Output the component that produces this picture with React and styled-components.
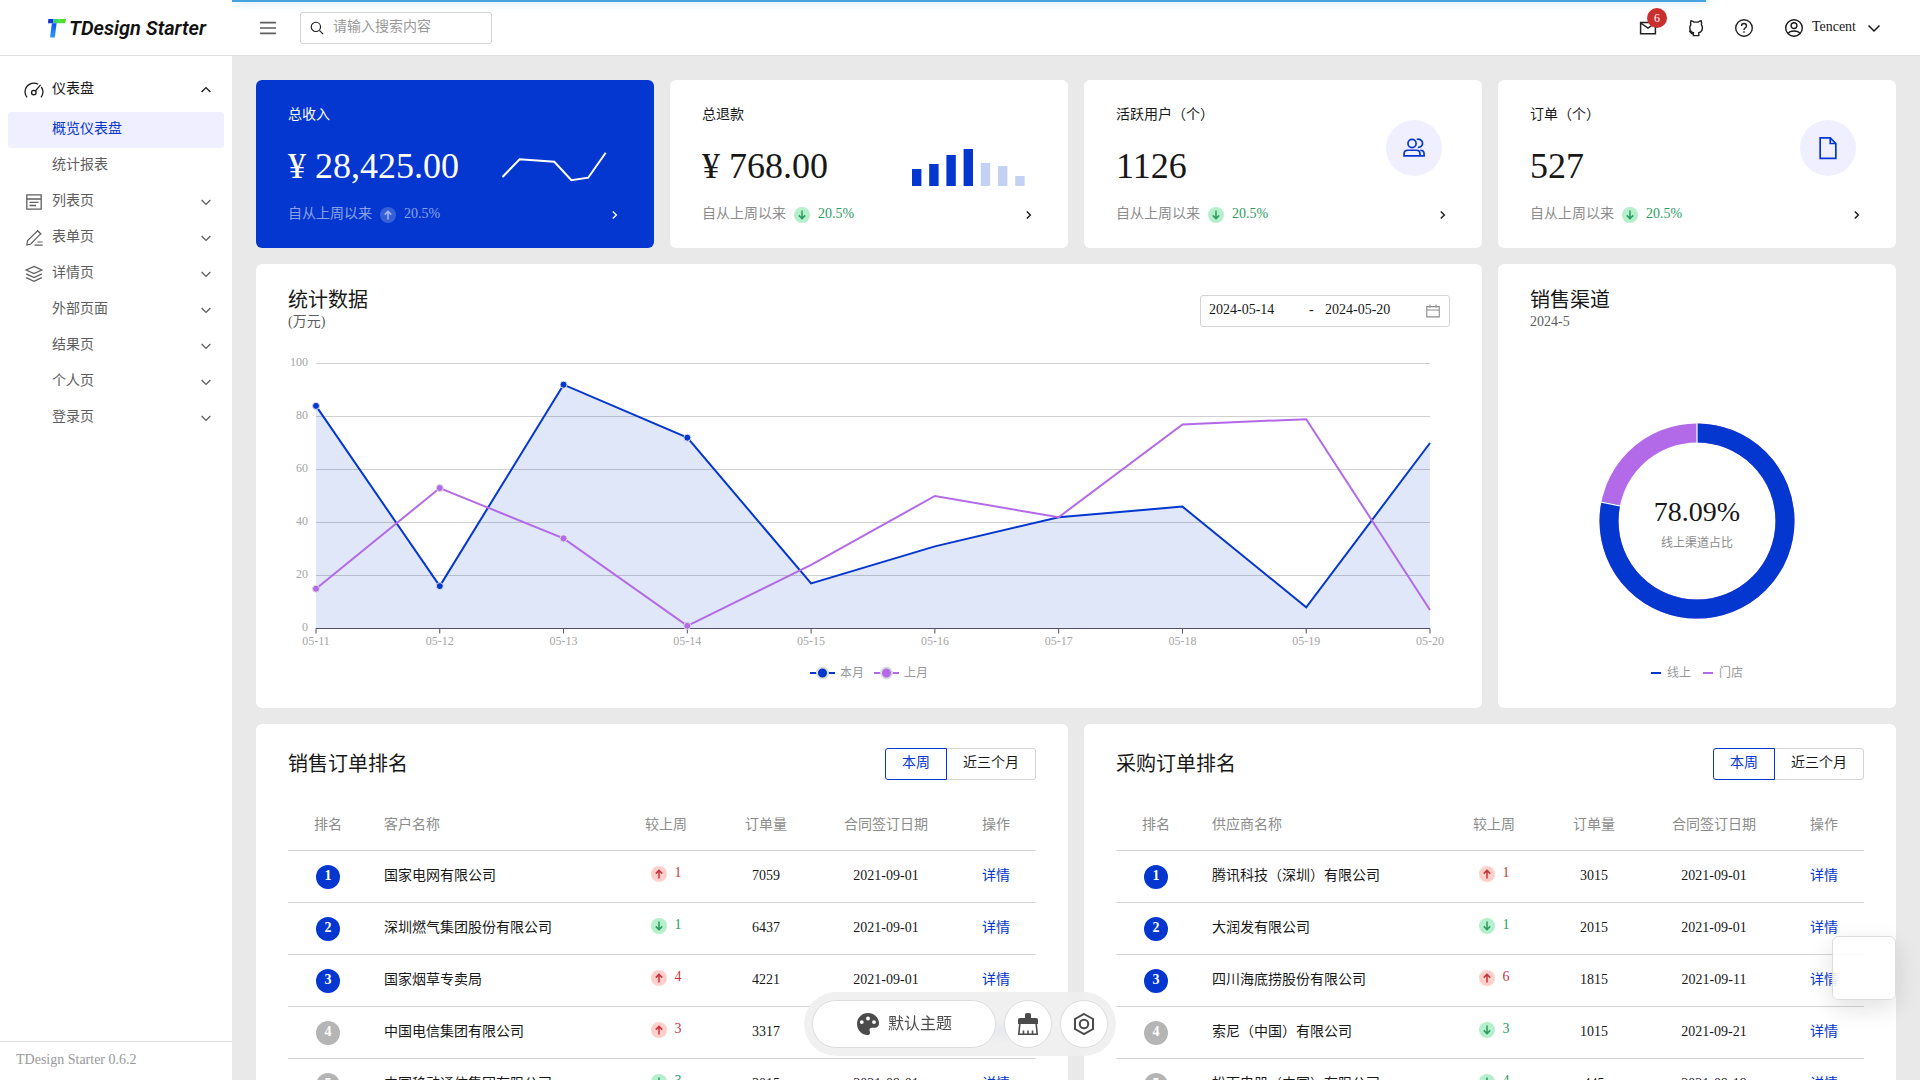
import React, { useState } from "react";
import styled, { createGlobalStyle, css } from "styled-components";

const BRAND = "#0437cf";
const PURPLE = "#b36ae8";

const GlobalStyle = createGlobalStyle`
  *, *::before, *::after {
    box-sizing: border-box;
  }
  body {
    margin: 0;
    background: #e9e9e9;
    color: #181818;
    font-family: "Liberation Serif", "Noto Sans CJK SC", serif;
    font-size: 14px;
    line-height: 22px;
  }
  button, input {
    font: inherit;
    color: inherit;
  }
  button {
    border: 0;
    padding: 0;
    background: none;
    cursor: pointer;
  }
  a {
    color: inherit;
    text-decoration: none;
  }
  h1, h2, p {
    margin: 0;
    font-weight: 400;
  }
  svg {
    display: block;
    flex-shrink: 0;
  }
`;

/* ---------- icons ---------- */

const Icon = ({ size = 20, width = 1.3, children }) => (
  <svg
    width={size}
    height={size}
    viewBox="0 0 20 20"
    fill="none"
    stroke="currentColor"
    strokeWidth={width}
    aria-hidden="true"
  >
    {children}
  </svg>
);

const DashboardIcon = () => (
  <Icon>
    <path d="M3 17.3A9.3 9.3 0 0 1 1 12 9 9 0 0 1 14.2 4.2M17.3 7A9 9 0 0 1 19 12a9.3 9.3 0 0 1-2 5.3" />
    <circle cx="9.8" cy="12.6" r="2.3" />
    <path d="M11.4 10.9l5.2-6" />
  </Icon>
);
const ListIcon = () => (
  <Icon>
    <path d="M2.8 2.8h14.4v14.4H2.8zM2.8 7h14.4M5.5 10.3h9M5.5 13.5h6.5" />
  </Icon>
);
const EditIcon = () => (
  <Icon width={1.2}>
    <path d="M2.8 17l.8-4.4 10-9.8 3 3-9.8 10.2zM13.2 2.2l4.2 4.2M13.5 14h5.2M10.5 17.2h8.2" />
  </Icon>
);
const LayersIcon = () => (
  <Icon>
    <path d="M10 2.4l7.8 3.6L10 9.6 2.2 6zM2.2 9.8L10 13.6l7.8-3.8M2.2 13.6L10 17.4l7.8-3.8" />
  </Icon>
);
const MenuIcon = () => (
  <Icon width={1.6}>
    <path d="M2 4.6h16M2 10h16M2 15.4h16" />
  </Icon>
);
const SearchIcon = () => (
  <Icon size={16} width={1.4}>
    <circle cx="8.6" cy="8.6" r="5.8" />
    <path d="M13 13l4.6 4.6" />
  </Icon>
);
const MailIcon = () => (
  <Icon width={1.5}>
    <path d="M2.6 4.6h14.8v11.2H2.6zM2.6 5l7.4 5.2L17.4 5" />
  </Icon>
);
const GithubIcon = () => (
  <Icon width={1.4}>
    <path d="M7.4 17.6v-3C5 14.200 3.800 12.600 3.800 9.800c0-1.300.3-2.300 1-3.100-.3-1.300-.2-2.700.2-3.900 1.200.1 2.200.7 3 1.300h4.200c.8-.6 1.800-1.200 3-1.300.4 1.200.5 2.600.2 3.900.7.8 1 1.800 1 3.100 0 2.800-1.200 4.400-3.600 4.800v3zM7.400 16c-2.400.4-2.600-2.400-4.400-2.900" />
  </Icon>
);
const HelpIcon = () => (
  <Icon width={1.4}>
    <circle cx="10" cy="10" r="8.3" />
    <path d="M7.5 8c0-1.500 1.100-2.500 2.500-2.500s2.500 1 2.500 2.400c0 1.900-2.500 2-2.500 4.100M10 13.200v1.600" />
  </Icon>
);
const UserIcon = () => (
  <Icon width={1.4}>
    <circle cx="10" cy="10" r="8.3" />
    <circle cx="10" cy="7.6" r="2.9" />
    <path d="M4 15.600c1-1.700 3.200-2.600 6-2.600s5 .9 6 2.600" />
  </Icon>
);
const ChevronIcon = ({ size = 16, direction = "down", width = 1.7 }) => {
  const paths = {
    down: "M4.500 7.500L10 13l5.500-5.500",
    up: "M4.500 12.500L10 7l5.500 5.500",
    right: "M8.500 5.500L13 10l-4.500 4.500",
  };
  return (
    <Icon size={size} width={width}>
      <path d={paths[direction]} />
    </Icon>
  );
};
const CalendarIcon = () => (
  <Icon size={16} width={1.4}>
    <path d="M2.200 4.500h15.600v12.800H2.200zM2.200 8.800h15.600M6.200 1.800v4M13.800 1.800v4" />
  </Icon>
);
const UsersIcon = () => (
  <Icon size={28} width={1.2}>
    <circle cx="8.6" cy="6.8" r="2.9" />
    <path d="M12 4a2.900 2.900 0 1 1 .8 5.500M2.900 15.600v-1.400c0-1.500 1-2.600 2.600-2.600h6.200c1.600 0 2.600 1.100 2.600 2.600v1.400zM14.500 11.600c1.700 0 2.700 1.100 2.700 2.600v1.400h-2.900" />
  </Icon>
);
const FileIcon = () => (
  <Icon size={28} width={1.2}>
    <path d="M4.400 2.800h7.200l4 4v10.600H4.400zM11.600 2.800v4h4" />
  </Icon>
);
const ArrowIcon = ({ up }) => (
  <Icon size={16} width={1.9}>
    <path
      d={up ? "M10 15.500V5.500M6 9.500l4-4 4 4" : "M10 4.500v10M6 10.500l4 4 4-4"}
    />
  </Icon>
);
const PaletteIcon = () => (
  <svg width="24" height="24" viewBox="0 0 24 24" aria-hidden="true">
    <path
      fill="currentColor"
      fillRule="evenodd"
      d="M12 1C5.900 1 1 5.800 1 11.900 1 18 5.900 23 11.600 23c1.700 0 2.600-1.200 2.400-2.600l-.5-2.400c-.2-1.300.7-2.300 2-2.300h3.300c2.500 0 4.200-1.800 4.200-4.300C23 5.400 18 1 12 1zM5.800 12a1.900 1.900 0 1 1 0-3.800 1.900 1.900 0 0 1 0 3.800zM12 8.400a1.900 1.900 0 1 1 0-3.800 1.900 1.900 0 0 1 0 3.800zM18 12a1.900 1.900 0 1 1 0-3.800 1.900 1.900 0 0 1 0 3.800z"
    />
  </svg>
);
const BrushIcon = () => (
  <svg width="24" height="24" viewBox="0 0 24 24" aria-hidden="true">
    <path
      fill="currentColor"
      d="M9 3c0-1.200.8-2 2-2h2c1.200 0 2 .8 2 2v3h5c1.200 0 2 .8 2 2v4H2V8c0-1.200.8-2 2-2h5z"
    />
    <path
      fill="none"
      stroke="currentColor"
      strokeWidth="1.6"
      d="M3.800 12l-1 10.200h18.400l-1-10.200M7.500 22v-3.500M12 22v-3.500M16.500 22v-3.500"
    />
  </svg>
);
const SettingIcon = () => (
  <svg
    width="24"
    height="24"
    viewBox="0 0 24 24"
    fill="none"
    stroke="currentColor"
    strokeWidth="2"
    aria-hidden="true"
  >
    <path d="M12 2l9 5v10l-9 5-9-5V7z" />
    <circle cx="12" cy="12" r="4.2" />
  </svg>
);
const LogoMark = () => (
  <svg width="18" height="20" viewBox="0 0 18 20" aria-hidden="true">
    <defs>
      <linearGradient id="leaf" x1="0" x2="1">
        <stop offset="0" stopColor="#1fc9a0" />
        <stop offset="0.5" stopColor="#5be03a" />
        <stop offset="1" stopColor="#3fdc2c" />
      </linearGradient>
      <linearGradient id="stem" x1="0" x2="0" y1="0" y2="1">
        <stop offset="0" stopColor="#0a55e8" />
        <stop offset="1" stopColor="#2b9bff" />
      </linearGradient>
    </defs>
    <path d="M.3 1h4.900v4.200H0z" fill="#1337d6" />
    <path d="M5.200 1H18l-.9 4.200H5.200z" fill="url(#leaf)" />
    <path d="M3.900 5.200h4.700L6.800 19.400H2z" fill="url(#stem)" />
  </svg>
);

/* ---------- layout ---------- */

const Layout = styled.div`
  display: flex;
  height: 100vh;
  overflow: hidden;
`;

const Progress = styled.div`
  position: fixed;
  top: 0;
  left: 232px;
  right: 214px;
  height: 2px;
  background: #45a3e0;
  box-shadow: 4px 0 8px rgba(69, 163, 224, 0.6);
  clip-path: inset(0 -16px -8px 0);
  z-index: 5;
`;

const Sidebar = styled.aside`
  display: flex;
  flex-direction: column;
  flex-shrink: 0;
  width: 232px;
  background: #fff;
`;

const Logo = styled.a`
  display: flex;
  align-items: center;
  gap: 3px;
  height: 56px;
  padding-left: 48px;
  border-bottom: 1px solid #dfdfdf;
  font-family: Roboto, sans-serif;
  font-size: 20px;
  font-weight: 600;
  font-style: italic;
  color: #111;
`;

const Menu = styled.ul`
  flex: 1;
  margin: 0;
  padding: 16px 8px;
  list-style: none;
`;

const SubMenu = styled.ul`
  margin: 4px 0 0;
  padding: 0;
  list-style: none;
`;

const MenuLink = styled.a`
  display: grid;
  grid-template-columns: 20px 1fr 16px;
  align-items: center;
  gap: 8px;
  height: 36px;
  padding: 0 10px 0 16px;
  border-radius: 3px;
  color: #5e5e5e;

  ${(props) =>
    props.$open &&
    css`
      color: #181818;
    `}
  ${(props) =>
    props.$active &&
    css`
      color: ${BRAND};
      background: #f0efff;
    `}
`;

const Raised = styled.span`
  padding-bottom: 2px;
`;

const Version = styled.footer`
  padding: 7px 16px 9px;
  border-top: 1px solid #dfdfdf;
  color: #999;
`;

const Main = styled.div`
  display: flex;
  flex: 1;
  flex-direction: column;
  min-width: 0;
`;

const Header = styled.header`
  display: flex;
  flex-shrink: 0;
  align-items: center;
  justify-content: space-between;
  height: 56px;
  padding: 0 28px 0 20px;
  background: #fff;
  border-bottom: 1px solid #dfdfdf;
`;

const HeaderGroup = styled.div`
  display: flex;
  align-items: center;
  gap: 16px;
`;

const IconButton = styled.button`
  display: flex;
  position: relative;
  align-items: center;
  justify-content: center;
  width: 32px;
  height: 32px;
  color: ${(props) => props.$color || "#222"};
`;

const Badge = styled.span`
  position: absolute;
  top: -4px;
  right: -3px;
  width: 20px;
  height: 20px;
  border-radius: 10px;
  background: #c9302d;
  color: #fff;
  font-size: 12px;
  line-height: 20px;
  text-align: center;
`;

const Search = styled.label`
  display: flex;
  align-items: center;
  gap: 8px;
  width: 192px;
  height: 32px;
  padding: 0 8px;
  border: 1px solid #d4d4d4;
  border-radius: 3px;

  input {
    width: 100%;
    padding: 0 0 2px;
    border: 0;
    outline: 0;
    background: none;
  }
  input::placeholder {
    color: #999;
    opacity: 1;
  }
`;

const UserButton = styled.button`
  display: flex;
  align-items: center;
  gap: 8px;
  height: 32px;
  padding: 0 8px;
`;

const Content = styled.main`
  display: grid;
  grid-template-columns: repeat(4, minmax(0, 1fr));
  grid-auto-rows: max-content;
  gap: 16px;
  flex: 1;
  padding: 24px;
  overflow: auto;
  scrollbar-width: none;
`;

const Card = styled.section`
  grid-column: span ${(props) => props.$span || 1};
  padding: 24px 32px;
  border-radius: 6px;
  background: #fff;
`;

const StatCard = styled(Card)`
  display: grid;
  grid-template-columns: 1fr auto;
  grid-template-rows: 24px 76px 22px;
  padding-bottom: 22px;
  color: ${(props) => (props.$primary ? "#fff" : "#181818")};
  background: ${(props) => (props.$primary ? BRAND : "#fff")};
`;

const StatLabel = styled.h2`
  font-size: 14px;
  line-height: 22px;
`;

const StatValue = styled.p`
  grid-row: 2;
  align-self: center;
  font-size: 36px;
  line-height: 44px;
  white-space: nowrap;
`;

const StatAside = styled.div`
  grid-row: 1 / 3;
  grid-column: 2;
  padding-right: 8px;
`;

const StatBadge = styled.div`
  display: flex;
  align-items: center;
  justify-content: center;
  width: 56px;
  height: 56px;
  margin-top: 16px;
  border-radius: 50%;
  color: ${BRAND};
  background: #f0efff;
`;

const StatFooter = styled.div`
  display: flex;
  grid-column: 1 / 3;
  align-items: center;
  justify-content: space-between;
`;

const Since = styled.span`
  display: flex;
  align-items: center;
  gap: 8px;
  color: ${(props) => (props.$primary ? "rgba(255, 255, 255, 0.55)" : "#8c8c8c")};
`;

const trendTones = {
  up: ["#c9353f", "#ffcfca"],
  down: ["#2b9c62", "#b5efcb"],
  plain: ["rgba(255, 255, 255, 0.55)", "rgba(255, 255, 255, 0.2)"],
};

const TrendWrap = styled.span`
  display: inline-flex;
  align-items: center;
  gap: 8px;
  color: ${(props) => trendTones[props.$tone][0]};

  svg {
    border-radius: 50%;
    background: ${(props) => trendTones[props.$tone][1]};
  }
`;

const CardHead = styled.div`
  display: flex;
  align-items: center;
  justify-content: space-between;
  min-height: ${(props) => (props.$tall ? 46 : 32)}px;
`;

const Title = styled.h2`
  font-size: 20px;
  line-height: 22px;
`;

const SubTitle = styled.p`
  color: #5e5e5e;
`;

const DateRange = styled.div`
  display: flex;
  align-items: center;
  width: 250px;
  height: 32px;
  padding: 0 8px;
  border: 1px solid #d4d4d4;
  border-radius: 3px;

  input {
    width: 100px;
    padding: 0 0 2px;
    border: 0;
    outline: 0;
    background: none;
  }
  span {
    width: 16px;
    padding-bottom: 2px;
  }
  svg {
    color: #8c8c8c;
  }
`;

const TrendChartSvg = styled.svg`
  width: 100%;
  height: auto;
  margin-top: 24px;
  overflow: visible;
  font-size: 12px;
`;

const Legend = styled.ul`
  display: flex;
  justify-content: center;
  gap: ${(props) => (props.$compact ? 12 : 10)}px;
  margin: ${(props) => (props.$compact ? 0 : 12)}px 0 0;
  padding: 0;
  list-style: none;
  font-size: 12px;
  color: #999;

  li {
    display: flex;
    align-items: center;
    gap: ${(props) => (props.$compact ? 6 : 5)}px;
  }
`;

const DonutCard = styled(Card)`
  display: flex;
  flex-direction: column;
`;

const DonutWrap = styled.div`
  display: flex;
  flex: 1;
  align-items: center;
  justify-content: center;
  padding-top: 46px;
`;

const Segmented = styled.fieldset`
  display: flex;
  margin: 0;
  padding: 0;
  border: 0;

  label {
    position: relative;
    height: 32px;
    padding: 4px 16px;
    border: 1px solid #d4d4d4;
    line-height: 20px;
    cursor: pointer;
  }
  label:first-of-type {
    border-radius: 3px 0 0 3px;
  }
  label:last-of-type {
    margin-left: -1px;
    border-radius: 0 3px 3px 0;
  }
  label:has(input:checked) {
    z-index: 1;
    border-color: ${BRAND};
    color: ${BRAND};
  }
  input {
    position: absolute;
    opacity: 0;
    pointer-events: none;
  }
`;

const RankTable = styled.table`
  width: 100%;
  margin-top: 20px;
  border-collapse: separate;
  border-spacing: 0;
  table-layout: fixed;

  th,
  td {
    height: 52px;
    padding: 0 0 2px;
    border-bottom: 1px solid #d4d4d4;
    font-weight: 400;
    text-align: center;
    white-space: nowrap;
  }
  th {
    height: 51px;
    padding: 0;
    color: #8c8c8c;
  }
  th:nth-child(2),
  td:nth-child(2) {
    padding-left: 16px;
    text-align: left;
  }
  td a {
    color: ${BRAND};
  }
`;

const Rank = styled.span`
  display: block;
  width: 24px;
  height: 24px;
  margin: 2px auto 0;
  border-radius: 50%;
  background: ${(props) => (props.$top ? BRAND : "#b5b5b5")};
  color: #fff;
  font-weight: 700;
  line-height: 22px;
`;

const ThemeBar = styled.div`
  display: flex;
  position: fixed;
  bottom: 24px;
  left: 50%;
  gap: 8px;
  padding: 8px;
  border-radius: 32px;
  background: rgba(238, 238, 238, 0.9);
  backdrop-filter: blur(5px);
  transform: translateX(-50%);
  color: #4b4b4b;
`;

const ThemeButton = styled.button`
  display: flex;
  align-items: center;
  justify-content: center;
  gap: 8px;
  width: ${(props) => (props.$wide ? 184 : 48)}px;
  height: 48px;
  border: 1px solid #dcdcdc;
  border-radius: 24px;
  background: #fff;
  font-size: 16px;
`;

const FloatPanel = styled.div`
  position: fixed;
  right: 24px;
  bottom: 80px;
  width: 64px;
  height: 64px;
  border: 1px solid #dcdcdc;
  border-radius: 6px;
  background: rgba(255, 255, 255, 0.88);
  box-shadow: 0 8px 24px rgba(0, 0, 0, 0.12);
`;

/* ---------- data ---------- */

const menu = [
  {
    label: "仪表盘",
    icon: <DashboardIcon />,
    open: true,
    children: ["概览仪表盘", "统计报表"],
  },
  { label: "列表页", icon: <ListIcon /> },
  { label: "表单页", icon: <EditIcon /> },
  { label: "详情页", icon: <LayersIcon /> },
  { label: "外部页面" },
  { label: "结果页" },
  { label: "个人页" },
  { label: "登录页" },
];

const days = [11, 12, 13, 14, 15, 16, 17, 18, 19, 20];
const thisMonth = [84, 16, 92, 72, 17, 31, 42, 46, 8, 70];
const lastMonth = [15, 53, 34, 1, 24, 50, 42, 77, 79, 7];

const sales = [
  ["国家电网有限公司", 1, 7059, "2021-09-01"],
  ["深圳燃气集团股份有限公司", -1, 6437, "2021-09-01"],
  ["国家烟草专卖局", 4, 4221, "2021-09-01"],
  ["中国电信集团有限公司", 3, 3317, "2021-09-01"],
  ["中国移动通信集团有限公司", -3, 3015, "2021-09-01"],
];

const purchases = [
  ["腾讯科技（深圳）有限公司", 1, 3015, "2021-09-01"],
  ["大润发有限公司", -1, 2015, "2021-09-01"],
  ["四川海底捞股份有限公司", 6, 1815, "2021-09-11"],
  ["索尼（中国）有限公司", -3, 1015, "2021-09-21"],
  ["松下电器（中国）有限公司", -4, 445, "2021-09-19"],
];

/* ---------- parts ---------- */

const Trend = ({ up, tone, children }) => (
  <TrendWrap $tone={tone || (up ? "up" : "down")}>
    <ArrowIcon up={up} />
    <Raised>{children}</Raised>
  </TrendWrap>
);

const Stat = ({ label, value, primary, children }) => (
  <StatCard $primary={primary}>
    <StatLabel>{label}</StatLabel>
    <StatValue>{value}</StatValue>
    <StatAside>{children}</StatAside>
    <StatFooter>
      <Since $primary={primary}>
        <Raised>自从上周以来</Raised>
        <Trend up={primary} tone={primary ? "plain" : "down"}>
          20.5%
        </Trend>
      </Since>
      <ChevronIcon direction="right" />
    </StatFooter>
  </StatCard>
);

const SparkLine = () => (
  <svg width="120" height="82" viewBox="0 0 120 82" aria-hidden="true">
    <polyline
      points="8.5,73 25.6,55.3 60.3,57.7 77.4,76.3 94.2,73.7 111.7,48.7"
      fill="none"
      stroke="#fff"
      strokeWidth="2"
    />
  </svg>
);

const SparkBars = () => (
  <svg width="120" height="82" viewBox="0 0 120 82" aria-hidden="true">
    {[17, 22, 31, 37, 23, 20, 10].map((height, index) => (
      <rect
        key={index}
        x={4 + index * 17.2}
        y={82 - height}
        width="9.4"
        height={height}
        fill={index < 4 ? BRAND : "#c3d1f4"}
      />
    ))}
  </svg>
);

const TrendChart = () => {
  const x = (index) => 28 + (index * 1114) / 9;
  const y = (value) => 270.5 - value * 2.65;
  const line = (values) => values.map((v, i) => `${x(i)},${y(v)}`).join(" ");
  const dots = (values, color) =>
    values
      .slice(0, 4)
      .map((v, i) => (
        <circle key={i} cx={x(i)} cy={y(v)} r="3.5" fill={color} stroke="#dcdcdc" />
      ));

  return (
    <TrendChartSvg viewBox="0 0 1162 292" role="img" aria-label="统计数据">
      {[0, 20, 40, 60, 80, 100].map((tick) => (
        <g key={tick}>
          {tick > 0 && (
            <path d={`M28 ${Math.floor(y(tick)) + 0.5}H1142`} stroke="#d0d0d0" />
          )}
          <text x="20" y={y(tick) + 2} textAnchor="end" fill="#a6a6a6">
            {tick}
          </text>
        </g>
      ))}
      <polygon
        points={`28,270.5 ${line(thisMonth)} 1142,270.5`}
        fill={BRAND}
        fillOpacity="0.12"
      />
      <path d="M28 270.5H1142" stroke="#50506a" />
      {days.map((day, index) => (
        <g key={day}>
          <path d={`M${x(index)} 270.5v5`} stroke="#50506a" />
          <text x={x(index)} y="287" textAnchor="middle" fill="#a6a6a6">
            05-{day}
          </text>
        </g>
      ))}
      <polyline points={line(thisMonth)} fill="none" stroke={BRAND} strokeWidth="2" />
      <polyline points={line(lastMonth)} fill="none" stroke={PURPLE} strokeWidth="2" />
      {dots(thisMonth, BRAND)}
      {dots(lastMonth, PURPLE)}
    </TrendChartSvg>
  );
};

const LegendDot = ({ color }) => (
  <svg width="25" height="14" viewBox="0 0 25 14" aria-hidden="true">
    <path d="M0 7h25" stroke={color} strokeWidth="2" />
    <circle cx="12.5" cy="7" r="5.5" fill={color} stroke="#dcdcdc" strokeWidth="2" />
  </svg>
);

const LegendDash = ({ color }) => (
  <svg width="10" height="2" viewBox="0 0 10 2" aria-hidden="true">
    <path d="M0 1h10" stroke={color} strokeWidth="2" />
  </svg>
);

const Donut = () => {
  const circumference = 2 * Math.PI * 88;
  return (
    <svg width="200" height="200" viewBox="0 0 200 200" role="img" aria-label="销售渠道">
      <g fill="none" strokeWidth="19" transform="rotate(-90 100 100)">
        <circle cx="100" cy="100" r="88" stroke={PURPLE} />
        <circle
          cx="100"
          cy="100"
          r="88"
          stroke={BRAND}
          strokeDasharray={`${circumference * 0.7809} ${circumference}`}
        />
      </g>
      <path d="M100 2v20M3 80.8l20 4" stroke="#fff" strokeWidth="1.2" />
      <text x="100" y="100" textAnchor="middle" fontSize="28" fill="#181818">
        78.09%
      </text>
      <text x="100" y="126" textAnchor="middle" fontSize="12" fill="#8c8c8c">
        线上渠道占比
      </text>
    </svg>
  );
};

const RankCard = ({ id, title, nameLabel, rows }) => {
  const [range, setRange] = useState("本周");
  return (
    <Card $span={2}>
      <CardHead>
        <Title>{title}</Title>
        <Segmented aria-label={title}>
          {["本周", "近三个月"].map((option) => (
            <label key={option}>
              <input
                type="radio"
                name={id}
                checked={range === option}
                onChange={() => setRange(option)}
              />
              {option}
            </label>
          ))}
        </Segmented>
      </CardHead>
      <RankTable>
        <colgroup>
          <col width="80" />
          <col />
          <col width="100" />
          <col width="100" />
          <col width="140" />
          <col width="80" />
        </colgroup>
        <thead>
          <tr>
            <th>排名</th>
            <th>{nameLabel}</th>
            <th>较上周</th>
            <th>订单量</th>
            <th>合同签订日期</th>
            <th>操作</th>
          </tr>
        </thead>
        <tbody>
          {rows.map(([name, growth, count, date], index) => (
            <tr key={name}>
              <td>
                <Rank $top={index < 3}>{index + 1}</Rank>
              </td>
              <td>{name}</td>
              <td>
                <Trend up={growth > 0}>{Math.abs(growth)}</Trend>
              </td>
              <td>{count}</td>
              <td>{date}</td>
              <td>
                <a href="#detail">详情</a>
              </td>
            </tr>
          ))}
        </tbody>
      </RankTable>
    </Card>
  );
};

const App = () => {
  const [keyword, setKeyword] = useState("");
  const [start, setStart] = useState("2024-05-14");
  const [end, setEnd] = useState("2024-05-20");

  return (
    <>
      <GlobalStyle />
      <Layout>
        <Progress />
        <Sidebar>
          <Logo href="#home">
            <LogoMark />
            TDesign Starter
          </Logo>
          <Menu>
            {menu.map((item) => (
              <li key={item.label}>
                <MenuLink href="#menu" $open={item.open}>
                  <span>{item.icon}</span>
                  <Raised>{item.label}</Raised>
                  <ChevronIcon direction={item.open ? "up" : "down"} />
                </MenuLink>
                {item.children && (
                  <SubMenu>
                    {item.children.map((child, index) => (
                      <li key={child}>
                        <MenuLink href="#page" $active={index === 0}>
                          <span />
                          <Raised>{child}</Raised>
                        </MenuLink>
                      </li>
                    ))}
                  </SubMenu>
                )}
              </li>
            ))}
          </Menu>
          <Version>TDesign Starter 0.6.2</Version>
        </Sidebar>

        <Main>
          <Header>
            <HeaderGroup>
              <IconButton aria-label="菜单" $color="#5e5e5e">
                <MenuIcon />
              </IconButton>
              <Search>
                <SearchIcon />
                <input
                  aria-label="搜索"
                  placeholder="请输入搜索内容"
                  value={keyword}
                  onChange={(event) => setKeyword(event.target.value)}
                />
              </Search>
            </HeaderGroup>
            <HeaderGroup>
              <IconButton aria-label="消息">
                <MailIcon />
                <Badge>6</Badge>
              </IconButton>
              <IconButton aria-label="代码仓库">
                <GithubIcon />
              </IconButton>
              <IconButton aria-label="帮助">
                <HelpIcon />
              </IconButton>
              <UserButton>
                <UserIcon />
                <Raised>Tencent</Raised>
                <ChevronIcon size={20} width={1.5} />
              </UserButton>
            </HeaderGroup>
          </Header>

          <Content>
            <Stat label="总收入" value="¥ 28,425.00" primary>
              <SparkLine />
            </Stat>
            <Stat label="总退款" value="¥ 768.00">
              <SparkBars />
            </Stat>
            <Stat label="活跃用户（个）" value="1126">
              <StatBadge>
                <UsersIcon />
              </StatBadge>
            </Stat>
            <Stat label="订单（个）" value="527">
              <StatBadge>
                <FileIcon />
              </StatBadge>
            </Stat>

            <Card $span={3}>
              <CardHead $tall>
                <div>
                  <Title>统计数据</Title>
                  <SubTitle>(万元)</SubTitle>
                </div>
                <DateRange>
                  <input
                    aria-label="开始日期"
                    value={start}
                    onChange={(event) => setStart(event.target.value)}
                  />
                  <span>-</span>
                  <input
                    aria-label="结束日期"
                    value={end}
                    onChange={(event) => setEnd(event.target.value)}
                  />
                  <CalendarIcon />
                </DateRange>
              </CardHead>
              <TrendChart />
              <Legend>
                <li>
                  <LegendDot color={BRAND} />
                  本月
                </li>
                <li>
                  <LegendDot color={PURPLE} />
                  上月
                </li>
              </Legend>
            </Card>

            <DonutCard>
              <CardHead $tall>
                <div>
                  <Title>销售渠道</Title>
                  <SubTitle>2024-5</SubTitle>
                </div>
              </CardHead>
              <DonutWrap>
                <Donut />
              </DonutWrap>
              <Legend $compact>
                <li>
                  <LegendDash color={BRAND} />
                  线上
                </li>
                <li>
                  <LegendDash color={PURPLE} />
                  门店
                </li>
              </Legend>
            </DonutCard>

            <RankCard id="sales" title="销售订单排名" nameLabel="客户名称" rows={sales} />
            <RankCard
              id="purchases"
              title="采购订单排名"
              nameLabel="供应商名称"
              rows={purchases}
            />
          </Content>
        </Main>
      </Layout>

      <FloatPanel />
      <ThemeBar>
        <ThemeButton $wide>
          <PaletteIcon />
          默认主题
        </ThemeButton>
        <ThemeButton aria-label="清除">
          <BrushIcon />
        </ThemeButton>
        <ThemeButton aria-label="设置">
          <SettingIcon />
        </ThemeButton>
      </ThemeBar>
    </>
  );
};

export default App;
